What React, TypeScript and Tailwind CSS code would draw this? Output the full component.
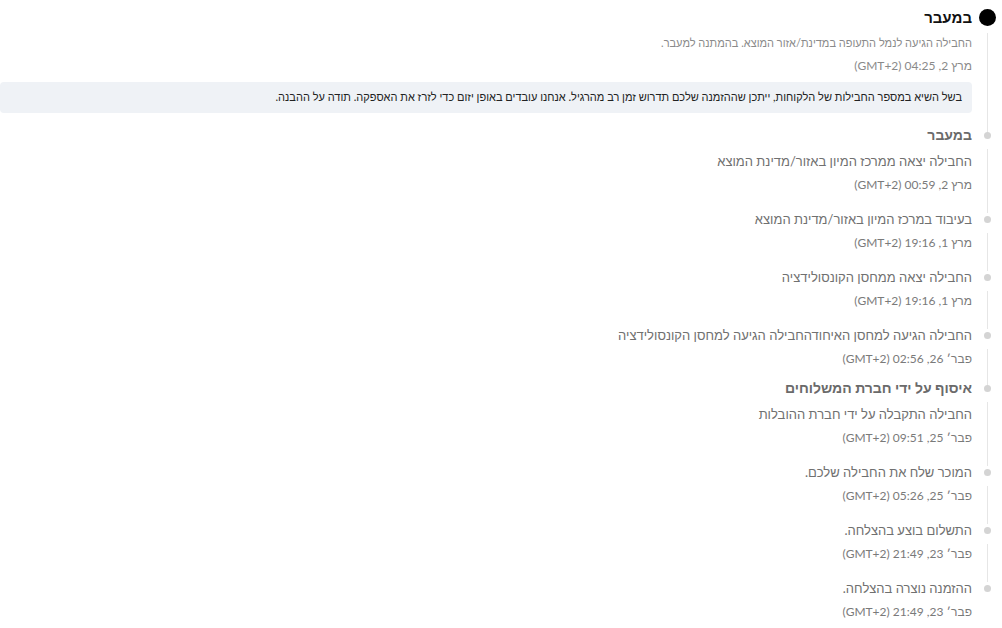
import React from 'react';

type Step = {
  title?: string;
  desc: string;
  date: string;
  gap: string;
};

const steps: Step[] = [
  {
    title: 'במעבר',
    desc: 'החבילה יצאה ממרכז המיון באזור/מדינת המוצא',
    date: 'מרץ 2, 00:59 (GMT+2)',
    gap: 'mt-3',
  },
  { desc: 'בעיבוד במרכז המיון באזור/מדינת המוצא', date: 'מרץ 1, 19:16 (GMT+2)', gap: 'mt-[14px]' },
  { desc: 'החבילה יצאה ממחסן הקונסולידציה', date: 'מרץ 1, 19:16 (GMT+2)', gap: 'mt-[14px]' },
  {
    desc: 'החבילה הגיעה למחסן האיחודהחבילה הגיעה למחסן הקונסולידציה',
    date: 'פבר׳ 26, 02:56 (GMT+2)',
    gap: 'mt-[14px]',
  },
  {
    title: 'איסוף על ידי חברת המשלוחים',
    desc: 'החבילה התקבלה על ידי חברת ההובלות',
    date: 'פבר׳ 25, 09:51 (GMT+2)',
    gap: 'mt-[9px]',
  },
  { desc: 'המוכר שלח את החבילה שלכם.', date: 'פבר׳ 25, 05:26 (GMT+2)', gap: 'mt-[14px]' },
  { desc: 'התשלום בוצע בהצלחה.', date: 'פבר׳ 23, 21:49 (GMT+2)', gap: 'mt-[14px]' },
  { desc: 'ההזמנה נוצרה בהצלחה.', date: 'פבר׳ 23, 21:49 (GMT+2)', gap: 'mt-[14px]' },
];

const StepRow = ({ step, last }: { step: Step; last: boolean }) => (
  <div className={`flex ${step.gap}`}>
    {/* Dot + line */}
    <div className="w-[30px] shrink-0 flex flex-col items-center">
      <div className="h-5 flex items-center">
        <div className="w-[7px] h-[7px] rounded-full bg-[#d4d4d4]" />
      </div>
      {!last && <div className="w-px flex-1 bg-[#e6e6e6] mt-1 -mb-[18px]" />}
    </div>
    <div className="flex-1 flex flex-col">
      {step.title && (
        <div className="h-5 leading-5 text-[14px] font-bold text-[#6a6a6a]">{step.title}</div>
      )}
      <div className={`h-5 leading-5 text-[13px] text-[#707070] ${step.title ? 'mt-1.5' : ''}`}>
        {step.desc}
      </div>
      <div className="h-5 leading-5 text-[12px] text-[#7a7a7a] mt-1">{step.date}</div>
    </div>
  </div>
);

export default function App() {
  return (
    <div
      dir="rtl"
      className="w-[1002px] h-[628px] bg-white overflow-hidden"
      style={{ fontFamily: 'Lato, "Liberation Sans", sans-serif' }}
    >
      {/* Current step */}
      <div className="flex pt-[5px]">
        <div className="w-[30px] shrink-0 flex flex-col items-center">
          <div className="h-6 flex items-center">
            <div className="w-[17px] h-[17px] rounded-full bg-black" />
          </div>
          <div className="w-px flex-1 bg-[#e6e6e6] mt-1 -mb-[22px]" />
        </div>
        <div className="flex-1 flex flex-col">
          <div className="h-6 leading-6 text-[15px] font-bold text-[#111]">במעבר</div>
          <div className="h-5 leading-5 text-[11px] text-[#8a8a8a] mt-1">
            החבילה הגיעה לנמל התעופה במדינת/אזור המוצא. בהמתנה למעבר.
          </div>
          <div className="h-5 leading-5 text-[12px] text-[#8a8a8a] mt-[3px]">מרץ 2, 04:25 (GMT+2)</div>
          <div className="mt-1.5 h-[31px] flex items-center rounded-[4px] bg-[#eff2f6] pr-2.5 text-[11px] text-[#222]">
            בשל השיא במספר החבילות של הלקוחות, ייתכן שההזמנה שלכם תדרוש זמן רב מהרגיל. אנחנו עובדים באופן יזום כדי לזרז את האספקה. תודה על ההבנה.
          </div>
        </div>
      </div>

      {steps.map((s, i) => (
        <StepRow key={i} step={s} last={i === steps.length - 1} />
      ))}
    </div>
  );
}
